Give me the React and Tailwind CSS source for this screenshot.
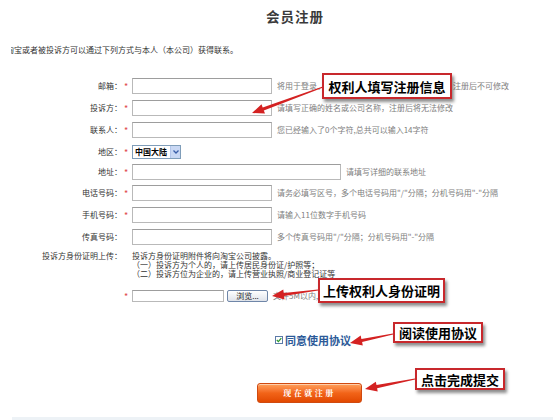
import React from "react";

const CJK = { fontFamily: '"Noto Sans CJK SC", "Noto Sans", sans-serif' };

function arrowPoints(x1, y1, x2, y2) {
  const dx = x2 - x1, dy = y2 - y1;
  const L = Math.hypot(dx, dy);
  const ux = dx / L, uy = dy / L;
  const nx = -uy, ny = ux;
  const hl = 12, hw = 5;
  const bx = x2 - ux * hl, by = y2 - uy * hl;
  const p = (x, y) => `${x.toFixed(1)},${y.toFixed(1)}`;
  return [
    p(x1 + nx * 0.6, y1 + ny * 0.6),
    p(bx + nx * 1.6, by + ny * 1.6),
    p(bx + nx * hw, by + ny * hw),
    p(x2, y2),
    p(bx - nx * hw, by - ny * hw),
    p(bx - nx * 1.6, by - ny * 1.6),
    p(x1 - nx * 0.6, y1 - ny * 0.6),
  ].join(" ");
}

const arrows = [
  [323, 87, 252, 113],
  [318, 290, 272, 296],
  [393, 334, 350, 343],
  [415, 379, 365, 389],
];

function Star() {
  return <span className="text-[#e04848] text-[9px] leading-none relative top-[-3px]">*</span>;
}

function Input({ w = "w-[140px]" }) {
  return <div className={`${w} h-[16px] border border-[#b9b9b9] border-t-[#9d9d9d] bg-white shrink-0`} />;
}

function Row({ label, star, h, children }) {
  return (
    <div className={`grid grid-cols-[122px_10px_1fr] items-center ${h}`}>
      <div className="text-right text-[8px] text-[#333] leading-none">{label}</div>
      <div className="pl-[2px]">{star ? <Star /> : null}</div>
      <div className="flex items-center">{children}</div>
    </div>
  );
}

function Hint({ children, ml = "ml-[5px]" }) {
  return <span className={`${ml} text-[8px] text-[#7e7e7e] leading-none whitespace-nowrap`}>{children}</span>;
}

function Callout({ pos, children }) {
  return (
    <div
      className={`absolute ${pos} border-2 border-[#c8282c] bg-white flex items-center justify-center shadow-[2px_3px_3px_rgba(0,0,0,0.45)]`}
    >
      <span className="text-[13px] font-bold text-black leading-none whitespace-nowrap">{children}</span>
    </div>
  );
}

export default function App() {
  return (
    <div className="relative w-[553px] h-[420px] overflow-hidden bg-white" style={CJK}>
      <div className="h-[32px] flex items-center justify-center pl-[37px]">
        <span className="text-[13.5px] font-bold text-[#3a3a3a] tracking-[1px]">会员注册</span>
      </div>
      <div className="mt-[12px] ml-[11px] h-[12px] overflow-hidden flex items-center">
        <span className="ml-[-5px] text-[8px] text-[#333] leading-none whitespace-nowrap">
          淘宝或者被投诉方可以通过下列方式与本人（本公司）获得联系。
        </span>
      </div>

      <div className="mt-[18px]">
        <Row label="邮箱：" star h="h-[22px]">
          <Input />
          <Hint>将用于登录、找回密码及接收投诉处理通知邮件，注册后不可修改</Hint>
        </Row>
        <Row label="投诉方：" star h="h-[22px]">
          <Input />
          <Hint>请填写正确的姓名或公司名称，注册后将无法修改</Hint>
        </Row>
        <Row label="联系人：" star h="h-[22px]">
          <Input />
          <Hint>您已经输入了0个字符,总共可以输入14字符</Hint>
        </Row>
        <Row label="地区：" star h="h-[20px]">
          <div className="w-[49px] h-[14px] border border-[#7f9db9] bg-white flex items-center">
            <span className="pl-[2px] text-[8px] font-semibold text-black leading-none flex-1">中国大陆</span>
            <div className="w-[10px] h-[12px] bg-[#c9d8f4] border-l border-[#b4c6ea] flex items-center justify-center">
              <svg width="6" height="4" viewBox="0 0 6 4">
                <path d="M0.5 0.5 L3 3 L5.5 0.5" fill="none" stroke="#3a5ea8" strokeWidth="1.3" />
              </svg>
            </div>
          </div>
        </Row>
        <Row label="地址：" star h="h-[21px]">
          <Input w="w-[209px]" />
          <Hint>请填写详细的联系地址</Hint>
        </Row>
        <Row label="电话号码：" star h="h-[22px]">
          <Input />
          <Hint>请务必填写区号，多个电话号码用"/"分隔；分机号码用"-"分隔</Hint>
        </Row>
        <Row label="手机号码：" star h="h-[23px]">
          <Input />
          <Hint>请输入11位数字手机号码</Hint>
        </Row>
        <Row label="传真号码：" h="h-[22px]">
          <Input />
          <Hint>多个传真号码用"/"分隔；分机号码用"-"分隔</Hint>
        </Row>

        <div className="mt-[3px] grid grid-cols-[122px_10px_1fr]">
          <div className="text-right text-[8px] text-[#333] leading-[9px]">投诉方身份证明上传：</div>
          <div />
          <div className="text-[8px] text-[#333] leading-[9px] whitespace-nowrap">
            <div>投诉方身份证明附件将向淘宝公司披露。</div>
            <div>（一）投诉方为个人的，请上传居民身份证/护照等；</div>
            <div>（二）投诉方位为企业的，请上传营业执照/商业登记证等</div>
          </div>
        </div>

        <div className="mt-[6px] grid grid-cols-[122px_10px_1fr] items-center h-[22px]">
          <div />
          <div className="pl-[2px]"><Star /></div>
          <div className="flex items-center">
            <div className="w-[92px] h-[12px] border border-[#b9b9b9] border-t-[#9d9d9d] bg-white" />
            <div className="ml-[3px] w-[41px] h-[12px] border border-[#6f86a8] rounded-[2px] bg-gradient-to-b from-[#ffffff] to-[#dfe3ea] flex items-center justify-center">
              <span className="text-[8px] text-[#222] leading-none">浏览...</span>
            </div>
            <Hint>文件5M以内,仅支持jpg/gif格式</Hint>
          </div>
        </div>
      </div>

      <div className="mt-[28px] pl-[275px] h-[12px] flex items-center gap-[2px]">
        <div className="w-[8px] h-[8px] border border-[#5b7aa8] bg-white flex items-center justify-center">
          <svg width="6" height="6" viewBox="0 0 6 6">
            <path d="M0.8 3 L2.4 4.6 L5.3 1.2" fill="none" stroke="#2f9a2f" strokeWidth="1.3" />
          </svg>
        </div>
        <span className="text-[11px] font-semibold text-[#2c5a98] leading-none whitespace-nowrap">同意使用协议</span>
      </div>

      <div className="mt-[37px] ml-[257px] w-[105px] h-[20px] rounded-[3px] border border-[#d04a10] bg-gradient-to-b from-[#ffa05a] via-[#f26418] to-[#e24800] flex items-center justify-center shadow-[inset_0_1px_0_rgba(255,255,255,0.5)]">
        <span className="text-[8px] font-bold text-white tracking-[2.5px] leading-none" style={{ fontFamily: '"Noto Serif CJK SC", "Noto Sans CJK SC", serif' }}>
          现在就注册
        </span>
      </div>

      <div className="mt-[14px] ml-[12px] h-[3px] bg-[#edf2f6]" />

      <svg className="absolute inset-0 pointer-events-none" width="553" height="420" viewBox="0 0 553 420">
        {arrows.map((a, i) => (
          <polygon key={i} points={arrowPoints(...a)} fill="#d42222" />
        ))}
      </svg>

      <Callout pos="left-[322px] top-[73px] w-[130px] h-[26px]">权利人填写注册信息</Callout>
      <Callout pos="left-[318px] top-[278px] w-[127px] h-[25px]">上传权利人身份证明</Callout>
      <Callout pos="left-[393px] top-[322px] w-[90px] h-[21px]">阅读使用协议</Callout>
      <Callout pos="left-[415px] top-[368px] w-[90px] h-[22px]">点击完成提交</Callout>
    </div>
  );
}
